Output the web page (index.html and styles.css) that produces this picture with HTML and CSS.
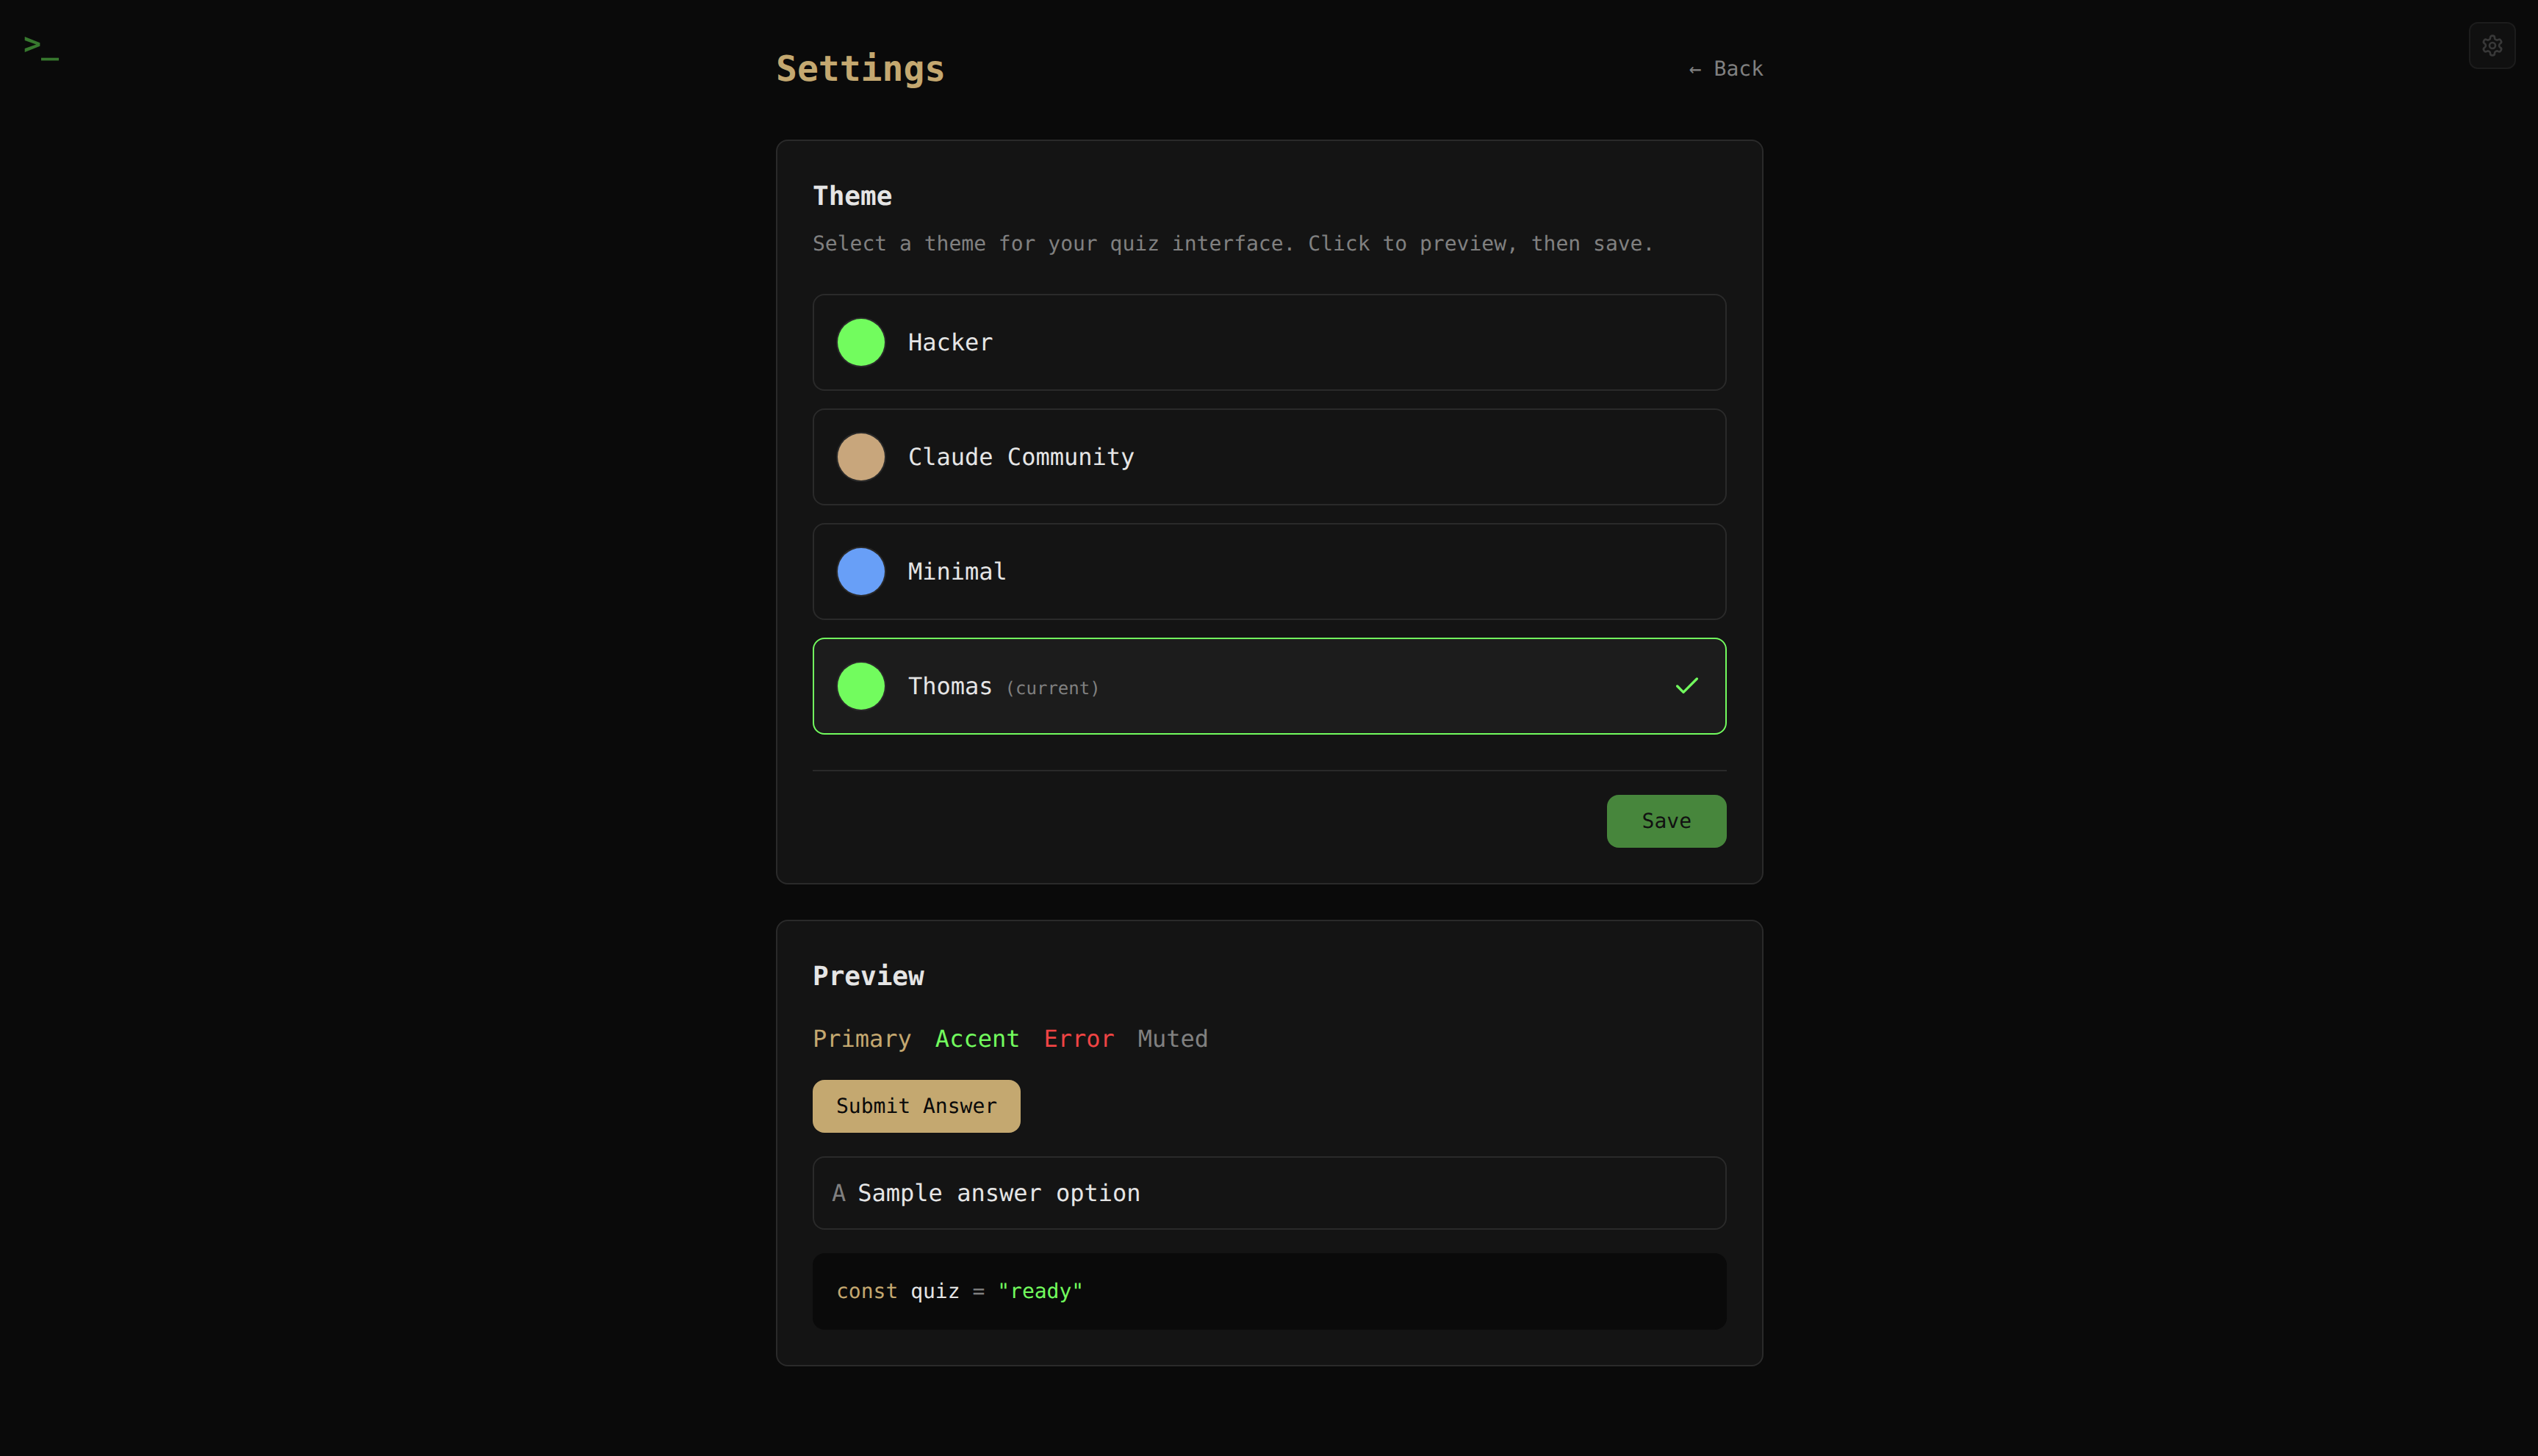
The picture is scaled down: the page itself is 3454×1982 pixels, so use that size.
FILE: index.html
```html
<!DOCTYPE html>
<html lang="en">
<head>
  <meta charset="UTF-8">
  <meta name="viewport" content="width=device-width, initial-scale=1.0">
  <title>Settings</title>
  <link rel="stylesheet" href="styles.css">
</head>
<body>
  <a class="logo" href="#">&gt;_</a>
  <button class="gear-btn" aria-label="Settings">
    <svg viewBox="0 0 24 24" width="32" height="32" fill="none" stroke="currentColor" stroke-width="2" stroke-linecap="round" stroke-linejoin="round">
      <path d="M12.22 2h-.44a2 2 0 0 0-2 2v.18a2 2 0 0 1-1 1.73l-.43.25a2 2 0 0 1-2 0l-.15-.08a2 2 0 0 0-2.73.73l-.22.38a2 2 0 0 0 .73 2.73l.15.1a2 2 0 0 1 1 1.72v.51a2 2 0 0 1-1 1.74l-.15.09a2 2 0 0 0-.73 2.73l.22.38a2 2 0 0 0 2.73.73l.15-.08a2 2 0 0 1 2 0l.43.25a2 2 0 0 1 1 1.73V20a2 2 0 0 0 2 2h.44a2 2 0 0 0 2-2v-.18a2 2 0 0 1 1-1.73l.43-.25a2 2 0 0 1 2 0l.15.08a2 2 0 0 0 2.73-.73l.22-.39a2 2 0 0 0-.73-2.73l-.15-.08a2 2 0 0 1-1-1.74v-.5a2 2 0 0 1 1-1.74l.15-.09a2 2 0 0 0 .73-2.73l-.22-.38a2 2 0 0 0-2.73-.73l-.15.08a2 2 0 0 1-2 0l-.43-.25a2 2 0 0 1-1-1.73V4a2 2 0 0 0-2-2z"/>
      <circle cx="12" cy="12" r="3"/>
    </svg>
  </button>

  <main class="page">
    <header class="page-header">
      <h1>Settings</h1>
      <a class="back" href="#">← Back</a>
    </header>

    <section class="card">
      <h2>Theme</h2>
      <p class="hint">Select a theme for your quiz interface. Click to preview, then save.</p>
      <div class="theme-list">
        <div class="theme-option">
          <span class="swatch swatch-green"></span>
          <span class="theme-name">Hacker</span>
        </div>
        <div class="theme-option">
          <span class="swatch swatch-tan"></span>
          <span class="theme-name">Claude Community</span>
        </div>
        <div class="theme-option">
          <span class="swatch swatch-blue"></span>
          <span class="theme-name">Minimal</span>
        </div>
        <div class="theme-option selected">
          <span class="swatch swatch-green"></span>
          <span class="theme-name">Thomas<span class="current">(current)</span></span>
          <svg class="check" viewBox="0 0 24 24" width="40" height="40" fill="none" stroke="currentColor" stroke-width="2" stroke-linecap="round" stroke-linejoin="round">
            <path d="M20 6 9 17l-5-5"/>
          </svg>
        </div>
      </div>
      <div class="actions">
        <button class="save-btn">Save</button>
      </div>
    </section>

    <section class="card">
      <h2>Preview</h2>
      <div class="swatch-words">
        <span class="c-primary">Primary</span>
        <span class="c-accent">Accent</span>
        <span class="c-error">Error</span>
        <span class="c-muted">Muted</span>
      </div>
      <button class="submit-btn">Submit Answer</button>
      <div class="answer"><span class="answer-key">A</span>Sample answer option</div>
      <div class="code"><span class="c-primary">const</span> quiz <span class="c-muted">=</span> <span class="c-accent">"ready"</span></div>
    </section>
  </main>
</body>
</html>
```

FILE: styles.css
```css
* { box-sizing: border-box; }
body {
  margin: 0;
  padding-left: 2px;
  min-height: 100vh;
  background: #0a0a0a;
  color: #e5e5e5;
  font-family: 'DejaVu Sans Mono', monospace;
  font-size: 32px;
  line-height: 48px;
  text-rendering: geometricPrecision;
}
button { font-family: inherit; text-rendering: inherit; }
a { text-decoration: none; }

.logo {
  position: fixed;
  top: 32px; left: 32px;
  font-size: 40px;
  line-height: 56px;
  font-weight: 700;
  color: #37782e;
}
.gear-btn {
  position: fixed;
  top: 30px; right: 30px;
  width: 64px; height: 64px;
  display: flex;
  align-items: center;
  justify-content: center;
  padding: 0;
  background: #101010;
  border: 2px solid #1c1c1c;
  border-radius: 12px;
  color: #383838;
}

.page {
  width: 1344px;
  margin: 0 auto;
  padding-top: 62px;
  padding-bottom: 122px;
}
.page-header {
  display: flex;
  justify-content: space-between;
  align-items: center;
  margin-bottom: 64px;
}
h1 {
  margin: 0;
  font-size: 48px;
  line-height: 64px;
  font-weight: 700;
  color: #c4a870;
}
.back { font-size: 28px; line-height: 40px; color: #808080; }

.card {
  background: #141414;
  border: 2px solid #2a2a2a;
  border-radius: 16px;
  padding: 48px;
  margin-bottom: 48px;
}
.card:last-child { margin-bottom: 0; }
h2 {
  margin: 0;
  font-size: 36px;
  line-height: 56px;
  font-weight: 700;
}
.hint {
  margin: 16px 0 48px;
  font-size: 28px;
  line-height: 40px;
  color: #808080;
}

.theme-list { display: flex; flex-direction: column; gap: 24px; }
.theme-option {
  display: flex;
  align-items: center;
  padding: 32px;
  border: 2px solid #2a2a2a;
  border-radius: 16px;
  background: #141414;
}
.theme-option.selected { border-color: #72fc5e; background: #1c1c1c; }
.swatch {
  width: 64px; height: 64px;
  margin-right: 32px;
  border-radius: 50%;
  box-shadow: 0 0 0 2px #2a2a2a;
}
.swatch-green { background: #72fc5e; }
.swatch-tan { background: #c8a67c; }
.swatch-blue { background: #689ff7; }
.current { margin-left: 16px; font-size: 24px; line-height: 1; color: #808080; }
.check { margin-left: auto; color: #72fc5e; }

.actions {
  display: flex;
  justify-content: flex-end;
  margin-top: 48px;
  padding-top: 32px;
  border-top: 2px solid #2a2a2a;
}
.save-btn {
  padding: 16px 48px;
  border: none;
  border-radius: 16px;
  background: #47863c;
  color: #111;
  font-size: 28px;
  line-height: 40px;
}

.swatch-words { display: flex; gap: 32px; margin-top: 32px; }
.c-primary { color: #c4a870; }
.c-accent { color: #72fc5e; }
.c-error { color: #ef4444; }
.c-muted { color: #808080; }

.submit-btn {
  display: block;
  margin-top: 32px;
  padding: 16px 32px;
  border: none;
  border-radius: 16px;
  background: #c4a870;
  color: #0a0a0a;
  font-size: 28px;
  line-height: 40px;
}
.answer {
  margin-top: 32px;
  padding: 24px;
  border: 2px solid #2a2a2a;
  border-radius: 16px;
}
.answer-key { margin-right: 16px; color: #808080; }
.code {
  margin-top: 32px;
  padding: 32px;
  border-radius: 16px;
  background: #0a0a0a;
  font-size: 28px;
  line-height: 40px;
}
```
